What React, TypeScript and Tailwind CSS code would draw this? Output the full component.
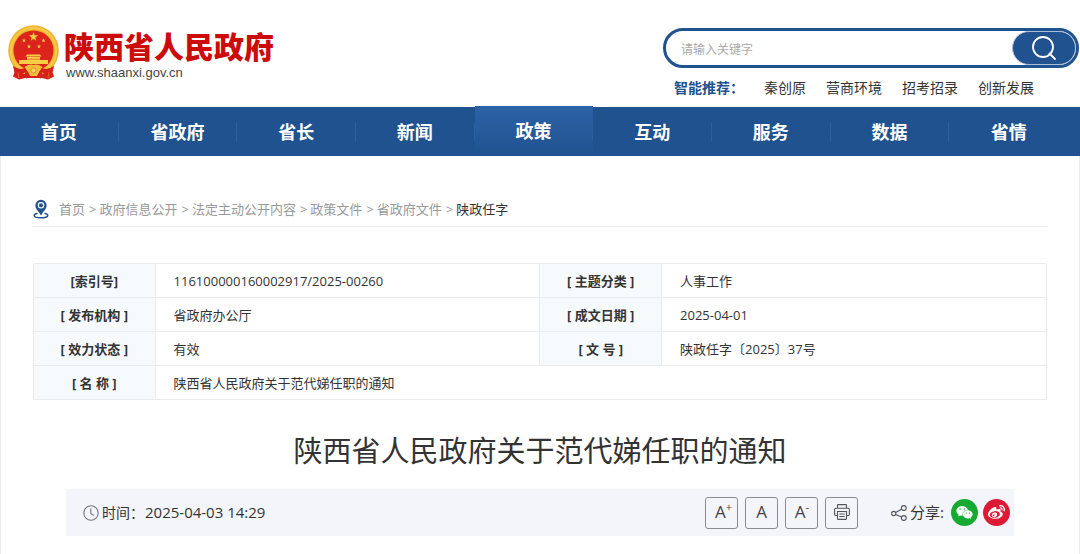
import React from "react";
import { FaWeixin, FaWeibo } from "react-icons/fa";

const navItems = ["首页", "省政府", "省长", "新闻", "政策", "互动", "服务", "数据", "省情"];
const hotWords = ["秦创原", "营商环境", "招考招录", "创新发展"];
const crumbs = ["首页", "政府信息公开", "法定主动公开内容", "政策文件", "省政府文件"];

function star(cx: number, cy: number, r: number) {
  const pts: string[] = [];
  for (let i = 0; i < 10; i++) {
    const a = (Math.PI / 5) * i - Math.PI / 2;
    const q = i % 2 === 0 ? r : r * 0.4;
    pts.push(`${(cx + q * Math.cos(a)).toFixed(2)},${(cy + q * Math.sin(a)).toFixed(2)}`);
  }
  return pts.join(" ");
}

function Emblem() {
  return (
    <svg viewBox="0 0 52 56" className="h-14 w-[52px] shrink-0" aria-hidden="true">
      <path d="M5 38 L6.500 47 L5 51.500 L11 54.500 L17 53 H34 L40 54.500 L46 51.500 L44.500 47 L46 38Z" fill="#d5201b" />
      <circle cx="25.500" cy="25.500" r="25.300" fill="#f0b32c" />
      <circle cx="25.500" cy="25.500" r="22.500" fill="none" stroke="#f7c848" strokeWidth="2.500" />
      <circle cx="25.500" cy="25.500" r="20" fill="#dc241c" />
      <g fill="#f7cf45">
        <polygon points={star(25.5, 11.8, 4.8)} />
        <polygon points={star(16, 15.5, 2.2)} />
        <polygon points={star(35.5, 15.5, 2.2)} />
        <polygon points={star(21, 21.5, 2.2)} />
        <polygon points={star(31, 21.5, 2.2)} />
        <path d="M19 29.500H32L33.500 31.500H17.500ZM19 32H32V35H19ZM11 35H40V39H11Z" />
      </g>
      <path d="M19 34.200H32" stroke="#dc241c" strokeWidth=".5" />
      <path d="M5 41Q12 46 18 42.500Q22 39.500 25.500 40.500Q29 39.500 33 42.500Q39 46 46 41L44.500 47Q39 49.500 34 47.500L30 51.500H21L17 47.500Q12 49.500 6.500 47Z" fill="#d5201b" />
      <path d="M16.500 42Q22 38.500 25.500 40Q29 38.500 34.500 42L31 47L29 51H22L20 47Z" fill="#f5bd3a" />
      <circle cx="25.500" cy="45.500" r="2.600" fill="#f8d460" stroke="#df7a22" strokeWidth=".8" />
      <path d="M17 47.500Q21 49 22 51.500H29Q30 49 34 47.500L33 53.500L25.500 51.500L18 53.500Z" fill="#d5201b" />
      <path d="M10 47.500L11 53M41 47.500L40 53" stroke="#ea8a24" strokeWidth=".7" />
    </svg>
  );
}

function SearchIcon() {
  return (
    <svg viewBox="0 0 26 26" className="size-[26px]" fill="none" stroke="white" strokeWidth="1.8" aria-hidden="true">
      <circle cx="12" cy="12" r="10" />
      <path d="M18.500 18.500L24 24" strokeLinecap="round" />
    </svg>
  );
}

function PinIcon() {
  return (
    <svg viewBox="0 0 16 20" className="h-5 w-4" aria-hidden="true">
      <path d="M4.500 14.200C2.400 14.700 1.200 15.500 1.200 16.500C1.200 17.900 4.200 18.800 8 18.800S14.800 17.900 14.800 16.500C14.800 15.500 13.600 14.700 11.500 14.200" fill="none" stroke="#20528f" strokeWidth="1.500" />
      <path d="M8 .8A5.600 5.600 0 0 0 2.400 6.400C2.400 10 6 12.500 8 16.500C10 12.500 13.600 10 13.600 6.400A5.600 5.600 0 0 0 8 .8Z" fill="#20528f" />
      <circle cx="8" cy="6.300" r="2.700" fill="none" stroke="white" strokeWidth="1.200" />
    </svg>
  );
}

function ClockIcon() {
  return (
    <svg viewBox="0 0 16 16" className="size-4" fill="none" stroke="#777" strokeWidth="1.100" aria-hidden="true">
      <circle cx="8" cy="8" r="7.200" />
      <path d="M7.800 3.500V8.500L11 10.500" />
    </svg>
  );
}

function PrintIcon() {
  return (
    <svg viewBox="0 0 16 16" className="size-4" fill="none" stroke="#555" strokeWidth="1.100" aria-hidden="true">
      <path d="M3.500 4V1.200Q3.500.6 4.200.6H11.800Q12.500.6 12.500 1.200V4" />
      <path d="M3.300 11.500H1.800Q.6 11.500.6 10.300V5.500Q.6 4.200 1.800 4.200H14.200Q15.400 4.200 15.400 5.500V10.300Q15.400 11.500 14.200 11.500H12.700" />
      <path d="M3.500 7.500H12.500V14.400Q12.500 15.400 11.500 15.400H4.500Q3.500 15.400 3.500 14.400ZM5.300 10H10.700M5.300 12.500H10.700" />
    </svg>
  );
}

function ShareIcon() {
  return (
    <svg viewBox="0 0 16 16" className="size-4" fill="none" stroke="#555" strokeWidth="1.100" aria-hidden="true">
      <circle cx="2.700" cy="8.500" r="2.100" />
      <circle cx="12.800" cy="3" r="2.400" />
      <circle cx="12.800" cy="13" r="2.400" />
      <path d="M4.600 7.500L10.600 4.200M4.600 9.500L10.600 12" />
    </svg>
  );
}

function Th({ children }: { children: React.ReactNode }) {
  return (
    <th scope="row" className="border border-[#ebebeb] bg-[#f6fafd] p-0 pt-px text-center font-bold">
      {children}
    </th>
  );
}

function Td({ children, span }: { children: React.ReactNode; span?: number }) {
  return (
    <td colSpan={span} className="border border-[#ebebeb] pt-px pr-2 pb-0 pl-[18px]">
      {children}
    </td>
  );
}

function ToolButton({ label, children }: { label: string; children: React.ReactNode }) {
  return (
    <button
      type="button"
      aria-label={label}
      className="flex h-8 w-[33px] items-center justify-center rounded-[3px] border border-[#8c8c90] pb-0.5 text-[17px] leading-6 font-medium text-[#444]"
    >
      {children}
    </button>
  );
}

export default function App() {
  return (
    <div className="min-h-screen bg-white font-['Open_Sans','Noto_Sans_CJK_SC',sans-serif] text-[#333]">
      <header className="flex justify-between pt-[25px]">
        <a href="#" className="flex h-[82px] items-start pl-2">
          <Emblem />
          <span className="flex flex-col pt-[3px] pl-1">
            <span className="text-[30px] leading-[38px] font-black text-[#cc0b0b]">陕西省人民政府</span>
            <span className="pl-0.5 font-['Liberation_Sans',sans-serif] text-[13px] leading-[14px] text-[#444]">
              www.shaanxi.gov.cn
            </span>
          </span>
        </a>
        <div className="w-[417px] pt-[3px] pr-px">
          <form
            className="flex h-10 items-center rounded-full border-3 border-[#20528f] pl-[15px]"
            onSubmit={(e) => e.preventDefault()}
          >
            <input
              type="text"
              aria-label="搜索"
              placeholder="请输入关键字"
              className="min-w-0 flex-1 bg-transparent pt-1 text-xs outline-none placeholder:text-[#aaa]"
            />
            <button
              type="submit"
              aria-label="搜索"
              className="flex h-[34px] w-16 items-center justify-center rounded-full border border-[#a9bdd8] bg-[#20528f]"
            >
              <SearchIcon />
            </button>
          </form>
          <div className="flex pt-2 pl-[11px] text-sm leading-6">
            <span className="w-[90px] font-bold text-[#20528f]">智能推荐：</span>
            <ul className="flex gap-5">
              {hotWords.map((w) => (
                <li key={w}>
                  <a href="#">{w}</a>
                </li>
              ))}
            </ul>
          </div>
        </div>
      </header>

      <nav className="bg-[#20528f] pr-3">
        <ul className="grid grid-cols-9 text-lg font-bold text-white">
          {navItems.map((item) => (
            <li key={item} className={item === "政策" ? "-mt-px bg-linear-to-b from-[#2c62a6] to-[#20528f]" : "group"}>
              <a href="#" className="flex h-[49px] items-center">
                <span className="flex h-[18px] flex-1 items-center justify-center border-r border-[#2f609b] group-last:border-r-0">
                  {item}
                </span>
              </a>
            </li>
          ))}
        </ul>
      </nav>

      <main className="border-x border-[#ececec] px-8 pb-[18px]">
        <div className="flex h-[71px] items-end gap-2.5 border-b border-[#ededed] pb-[7px] text-[13px] leading-5">
          <PinIcon />
          <ol className="flex gap-[3px] text-[#999]">
            {crumbs.map((c) => (
              <li key={c} className="flex gap-1">
                <a href="#">{c}</a>
                <span>&gt;</span>
              </li>
            ))}
            <li className="text-[#333]">陕政任字</li>
          </ol>
        </div>

        <table className="mt-9 w-full table-fixed border-collapse text-[13px] leading-[19px]">
          <colgroup>
            <col className="w-[12%]" />
            <col className="w-[38%]" />
            <col className="w-[12%]" />
            <col className="w-[38%]" />
          </colgroup>
          <tbody>
            <tr className="h-[34px]">
              <Th>[索引号]</Th>
              <Td>116100000160002917/2025-00260</Td>
              <Th>[ 主题分类 ]</Th>
              <Td>人事工作</Td>
            </tr>
            <tr className="h-[34px]">
              <Th>[ 发布机构 ]</Th>
              <Td>省政府办公厅</Td>
              <Th>[ 成文日期 ]</Th>
              <Td>2025-04-01</Td>
            </tr>
            <tr className="h-[34px]">
              <Th>[ 效力状态 ]</Th>
              <Td>有效</Td>
              <Th>[ 文 号 ]</Th>
              <Td>陕政任字〔2025〕37号</Td>
            </tr>
            <tr className="h-[34px]">
              <Th>[ 名 称 ]</Th>
              <Td span={3}>陕西省人民政府关于范代娣任职的通知</Td>
            </tr>
          </tbody>
        </table>

        <h1 className="pt-[31px] text-center text-[29px] leading-10">陕西省人民政府关于范代娣任职的通知</h1>

        <div className="mx-[33px] mt-[18px] flex h-[47px] items-center bg-[#f4f5fb] pr-1 pl-[17px]">
          <ClockIcon />
          <span className="ml-[3px] text-sm">时间：</span>
          <time className="ml-px flex-1 text-[15px]">2025-04-03 14:29</time>
          <div className="flex gap-[7px]">
            <ToolButton label="放大字号">
              <span className="pl-1">A</span>
              <span className="pb-2.5 text-[11px]">+</span>
            </ToolButton>
            <ToolButton label="默认字号">A</ToolButton>
            <ToolButton label="缩小字号">
              <span className="pl-px">A</span>
              <span className="pb-2.5 text-[11px]">-</span>
            </ToolButton>
            <ToolButton label="打印">
              <PrintIcon />
            </ToolButton>
          </div>
          <div className="ml-[33px] flex items-center">
            <ShareIcon />
            <span className="ml-[3px] w-[41px] text-[15px]">分享:</span>
            <a href="#" aria-label="微信" className="flex size-[27px] items-center justify-center rounded-full bg-[#15ab33] text-white">
              <FaWeixin size={17} />
            </a>
            <a href="#" aria-label="微博" className="ml-[5px] flex size-[27px] items-center justify-center rounded-full bg-[#dc1a35] text-white">
              <FaWeibo size={17} />
            </a>
          </div>
        </div>
      </main>
    </div>
  );
}
